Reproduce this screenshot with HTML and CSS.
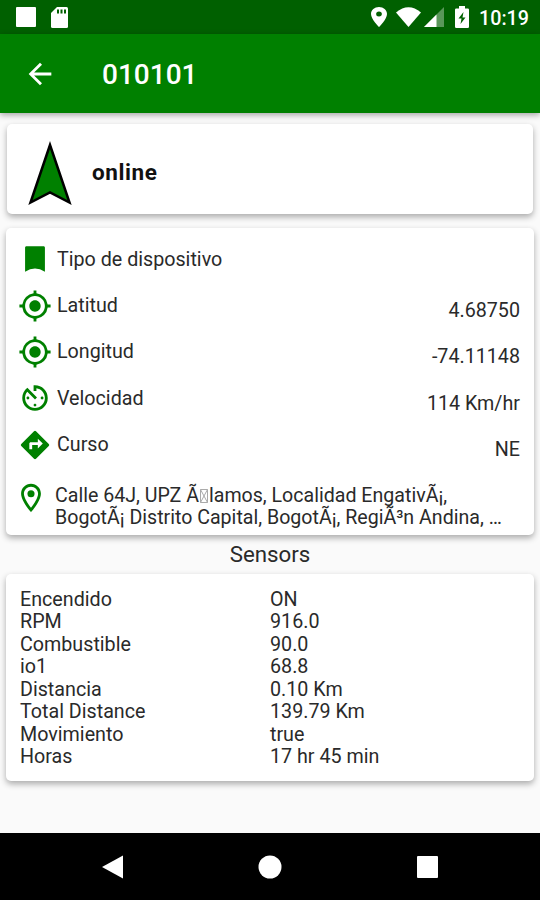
FILE: index.html
```html
<!DOCTYPE html>
<html lang="es">
<head>
  <meta charset="UTF-8">
  <meta name="viewport" content="width=device-width, initial-scale=1.0">
  <title>010101</title>
  <link rel="stylesheet" href="styles.css">
</head>
<body>
  <div class="status-bar">
    <svg class="status-square" width="20" height="20" viewBox="0 0 20 20"><rect width="20" height="20" rx="1"/></svg>
    <svg class="status-sd" width="17" height="21" viewBox="0 0 17 21"><path d="M6 0h9.500q1.500 0 1.500 1.500v18q0 1.500-1.500 1.500h-14q-1.500 0-1.500-1.500V6z"/><path class="cutout" d="M6 2.500h2v4h-2zM9.500 2.500h2v4h-2zM13 2.500h2v4h-2z"/></svg>
    <div class="status-right">
      <svg width="16" height="20" viewBox="5 2 14 20" preserveAspectRatio="none"><path d="M12 2C8.130 2 5 5.130 5 9c0 5.250 7 13 7 13s7-7.750 7-13c0-3.870-3.130-7-7-7zm0 9.500a2.500 2.500 0 1 1 0-5 2.500 2.500 0 0 1 0 5z"/></svg>
      <svg class="status-wifi" width="25" height="20" viewBox="0 0 25 20"><path d="M0 5.500Q12.500-5 25 5.500L12.500 20z"/></svg>
      <svg class="status-signal" width="20" height="20" viewBox="0 0 20 20"><path class="dim" d="M0 20L20 0v20z"/><path d="M0 20L12.500 7.500V20z"/></svg>
      <svg class="status-battery" width="14" height="22" viewBox="0 0 14 22"><path d="M4 0h6v2.500h2.700q1.300 0 1.300 1.300v16.900q0 1.300-1.300 1.300H1.300q-1.300 0-1.300-1.300V3.800q0-1.300 1.300-1.300H4z"/><path class="cutout" d="M8.500 6L3.500 12.500h3L5.500 18l5-6.500h-3z"/></svg>
      <span class="clock">10:19</span>
    </div>
  </div>

  <div class="app-bar">
    <svg class="back" width="34" height="34" viewBox="0 0 24 24"><path d="M20 11H7.830l5.590-5.590L12 4l-8 8 8 8 1.410-1.410L7.830 13H20v-2z"/></svg>
    <h1 class="title">010101</h1>
  </div>

  <div class="content">
    <div class="card status-card">
      <svg class="arrow" width="46" height="66" viewBox="0 0 46 66"><path d="M23 5L42.500 62.500 23 52.500 3.500 62.500z"/></svg>
      <span class="online">online</span>
    </div>

    <div class="card info-card">
      <div class="row">
        <svg class="icon" viewBox="0 0 24 24"><path d="M18 3H6c-.600 0-1 .400-1 1v17q7-4.500 14 0V4c0-.600-.400-1-1-1z"/></svg>
        <span class="label">Tipo de dispositivo</span>
      </div>
      <div class="row">
        <svg class="icon" viewBox="0 0 24 24"><path d="M12 8c-2.210 0-4 1.790-4 4s1.790 4 4 4 4-1.790 4-4-1.790-4-4-4zm8.940 3A8.994 8.994 0 0 0 13 3.060V1h-2v2.060A8.994 8.994 0 0 0 3.060 11H1v2h2.060A8.994 8.994 0 0 0 11 20.940V23h2v-2.060A8.994 8.994 0 0 0 20.940 13H23v-2h-2.060zM12 19c-3.870 0-7-3.130-7-7s3.130-7 7-7 7 3.130 7 7-3.130 7-7 7z"/></svg>
        <span class="label">Latitud</span>
        <span class="value">4.68750</span>
      </div>
      <div class="row">
        <svg class="icon" viewBox="0 0 24 24"><path d="M12 8c-2.210 0-4 1.790-4 4s1.790 4 4 4 4-1.790 4-4-1.790-4-4-4zm8.940 3A8.994 8.994 0 0 0 13 3.060V1h-2v2.060A8.994 8.994 0 0 0 3.060 11H1v2h2.060A8.994 8.994 0 0 0 11 20.940V23h2v-2.060A8.994 8.994 0 0 0 20.940 13H23v-2h-2.060zM12 19c-3.870 0-7-3.130-7-7s3.130-7 7-7 7 3.130 7 7-3.130 7-7 7z"/></svg>
        <span class="label">Longitud</span>
        <span class="value">-74.11148</span>
      </div>
      <div class="row">
        <svg class="icon" viewBox="0 0 24 24"><path d="M11 17c0 .550.450 1 1 1s1-.450 1-1-.450-1-1-1-1 .450-1 1zm0-14v4h2V5.080c3.390.490 6 3.390 6 6.920 0 3.870-3.130 7-7 7s-7-3.130-7-7c0-1.680.590-3.220 1.580-4.420L12 13l1.410-1.410-6.800-6.800v.020C4.420 6.450 3 9.050 3 12c0 4.970 4.020 9 9 9a9 9 0 0 0 0-18h-1zm7 9c0-.550-.450-1-1-1s-1 .450-1 1 .450 1 1 1 1-.450 1-1zM6 12c0 .550.450 1 1 1s1-.450 1-1-.450-1-1-1-1 .450-1 1z"/></svg>
        <span class="label">Velocidad</span>
        <span class="value">114 Km/hr</span>
      </div>
      <div class="row">
        <svg class="icon" viewBox="0 0 24 24"><path d="M21.710 11.290l-9-9a.996.996 0 0 0-1.410 0l-9 9a.996.996 0 0 0 0 1.410l9 9c.390.390 1.020.390 1.410 0l9-9a.996.996 0 0 0 0-1.410zM14 14.500V12h-4v3H8v-4c0-.550.450-1 1-1h5V7.500l3.500 3.500-3.500 3.500z"/></svg>
        <span class="label">Curso</span>
        <span class="value">NE</span>
      </div>
      <div class="address">
        <svg class="icon" viewBox="0 0 24 24"><path d="M12 2C8.130 2 5 5.130 5 9c0 5.250 7 13 7 13s7-7.750 7-13c0-3.870-3.130-7-7-7zM7 9c0-2.760 2.240-5 5-5s5 2.240 5 5c0 2.880-2.880 7.190-5 9.880C9.920 16.210 7 11.850 7 9z"/><circle cx="12" cy="9" r="2.500"/></svg>
        <p class="address-text">Calle 64J, UPZ Ã<svg class="tofu" width="8" height="14" viewBox="0 0 8 14"><path d="M.5.5h7v13h-7zL7.500 13.500M7.500.5L.5 13.500"/></svg>lamos, Localidad EngativÃ¡,<br>BogotÃ¡ Distrito Capital, BogotÃ¡, RegiÃ³n Andina, …</p>
      </div>
    </div>

    <h2 class="section-title">Sensors</h2>

    <div class="card sensors">
      <span>Encendido</span><span>ON</span>
      <span>RPM</span><span>916.0</span>
      <span>Combustible</span><span>90.0</span>
      <span>io1</span><span>68.8</span>
      <span>Distancia</span><span>0.10 Km</span>
      <span>Total Distance</span><span>139.79 Km</span>
      <span>Movimiento</span><span>true</span>
      <span>Horas</span><span>17 hr 45 min</span>
    </div>
  </div>

  <div class="nav-bar">
    <svg width="24" height="26" viewBox="0 0 24 26"><path d="M2 13L23 1.500v23z"/></svg>
    <svg width="24" height="26" viewBox="0 0 24 26"><circle cx="12" cy="13" r="11.500"/></svg>
    <svg width="24" height="26" viewBox="0 0 24 26"><rect x="1" y="2" width="21" height="22" rx="1"/></svg>
  </div>
</body>
</html>
```
FILE: styles.css
```css
* {
  box-sizing: border-box;
}
html, body {
  margin: 0;
  padding: 0;
  height: 100%;
}
body {
  display: flex;
  flex-direction: column;
  background-color: #fafafa;
  color: #2a2a2a;
  font-family: Roboto, sans-serif;
  font-size: 19.7px;
  overflow: hidden;
}
svg {
  display: block;
  flex: none;
}
.status-bar {
  display: flex;
  align-items: center;
  height: 34px;
  padding: 0 11px 0 16px;
  background-color: #006000;
  fill: #fff;
}
.status-sd {
  margin-left: 15px;
}
.status-right {
  display: flex;
  align-items: center;
  margin-left: auto;
}
.status-wifi {
  margin-left: 9px;
}
.status-signal {
  margin-left: 3px;
}
.status-battery {
  margin: 0 10px 1px 11px;
}
.cutout {
  fill: #006000;
}
.dim {
  opacity: 0.35;
}
.clock {
  margin-top: 3px;
  color: #fff;
  font-size: 19.7px;
  font-weight: 500;
  line-height: 31px;
}
.app-bar {
  display: flex;
  align-items: center;
  height: 79px;
  padding-left: 23px;
  background-color: #008000;
  box-shadow: 0 2px 6px rgba(0, 0, 0, 0.35);
  z-index: 1;
}
.back {
  fill: #fff;
}
.title {
  margin: 2px 0 0 45px;
  color: #fff;
  font-size: 28px;
  font-weight: 500;
}
.content {
  flex: 1;
  padding: 11px 6px 0;
}
.card {
  background-color: #fff;
  border-radius: 5px;
  box-shadow: 0 3px 6px rgba(0, 0, 0, 0.32);
}
.status-card {
  display: flex;
  align-items: center;
  height: 90px;
  margin: 0 1px 14px;
  padding: 8px 0 0 20px;
}
.arrow {
  fill: #008000;
  stroke: #000;
  stroke-width: 2.5;
}
.online {
  margin: 0 0 2px 19px;
  color: #111;
  font-size: 22.5px;
  font-weight: 700;
  letter-spacing: 0.6px;
}
.info-card {
  height: 307px;
  padding: 8px 14px 0 12px;
}
.row {
  display: flex;
  align-items: center;
  height: 46.4px;
}
.icon {
  width: 34px;
  height: 34px;
  fill: #008000;
}
.label {
  margin-left: 5px;
}
.value {
  margin: 10px 0 0 auto;
}
.address {
  display: flex;
  margin-left: -4px;
  padding-top: 13px;
}
.address-text {
  margin: 4px 0 0 7px;
  font-size: 19.6px;
  line-height: 22.5px;
  white-space: nowrap;
}
.tofu {
  display: inline-block;
  margin: 0 1px;
  vertical-align: -1px;
  fill: none;
  stroke: #aaa;
}
.section-title {
  margin: 0;
  font-size: 22.3px;
  font-weight: 400;
  line-height: 39px;
  text-align: center;
}
.sensors {
  display: grid;
  grid-template-columns: 250px 1fr;
  grid-auto-rows: 22.5px;
  height: 207px;
  padding: 14.5px 14px 14px;
  line-height: 22.5px;
}
.nav-bar {
  display: flex;
  align-items: center;
  justify-content: space-between;
  height: 67px;
  padding: 0 100px;
  background-color: #000;
  fill: #fff;
}
```
